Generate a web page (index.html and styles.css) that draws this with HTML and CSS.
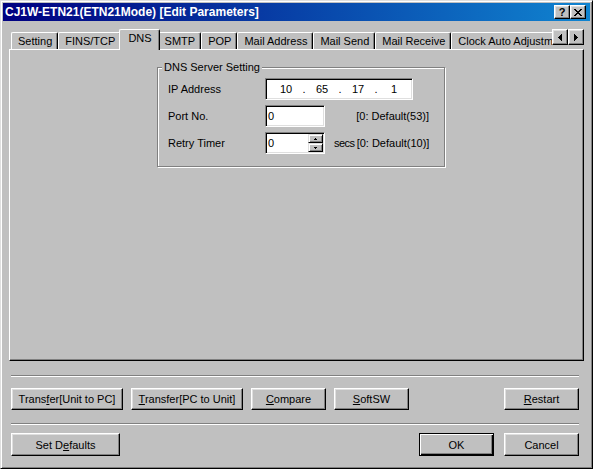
FILE: index.html
```html
<!DOCTYPE html>
<html>
<head>
<meta charset="utf-8">
<title>CJ1W-ETN21(ETN21Mode) [Edit Parameters]</title>
<link rel="stylesheet" href="styles.css">
</head>
<body>
<div class="window">
  <div class="titlebar">
    <span class="title">CJ1W-ETN21(ETN21Mode) [Edit Parameters]</span>
    <div class="caption-buttons">
      <span class="cap-btn help">?</span>
      <span class="cap-btn close">
        <svg width="8" height="7" viewBox="0 0 8 7" shape-rendering="crispEdges"><path d="M0 0h2v1H0zM6 0h2v1H6zM1 1h2v1H1zM5 1h2v1H5zM2 2h4v1H2zM3 3h2v1H3zM2 4h4v1H2zM1 5h2v1H1zM5 5h2v1H5zM0 6h2v1H0zM6 6h2v1H6z" fill="#000"/></svg>
      </span>
    </div>
  </div>

  <div class="tabstrip">
    <div class="tabs">
      <div class="tab">Setting</div>
      <div class="tab">FINS/TCP</div>
      <div class="tab active">DNS</div>
      <div class="tab">SMTP</div>
      <div class="tab">POP</div>
      <div class="tab">Mail Address</div>
      <div class="tab">Mail Send</div>
      <div class="tab">Mail Receive</div>
      <div class="tab">Clock Auto Adjustment</div>
    </div>
    <div class="tab-scroll">
      <span class="scroll-btn">
        <svg width="4" height="7" viewBox="0 0 4 7" shape-rendering="crispEdges"><path d="M0 3h1v1H0zM1 2h1v3H1zM2 1h1v5H2zM3 0h1v7H3z" fill="#000"/></svg>
      </span>
      <span class="scroll-btn">
        <svg width="4" height="7" viewBox="0 0 4 7" shape-rendering="crispEdges"><path d="M0 0h1v7H0zM1 1h1v5H1zM2 2h1v3H2zM3 3h1v1H3z" fill="#000"/></svg>
      </span>
    </div>
  </div>

  <div class="panel">
    <div class="group">
      <span class="legend">DNS Server Setting</span>
      <div class="rows">
        <div class="row">
          <span class="label">IP Address</span>
          <div class="field ip">
            <span class="octet">10</span><span class="dot">.</span>
            <span class="octet">65</span><span class="dot">.</span>
            <span class="octet">17</span><span class="dot">.</span>
            <span class="octet">1</span>
          </div>
        </div>
        <div class="row">
          <span class="label">Port No.</span>
          <div class="field small">
            <span class="field-text">0</span>
          </div>
          <span class="hint">[0: Default(53)]</span>
        </div>
        <div class="row">
          <span class="label">Retry Timer</span>
          <div class="field small">
            <span class="field-text">0</span>
            <div class="spin">
              <span class="spin-btn">
                <svg width="3" height="2" viewBox="0 0 3 2" shape-rendering="crispEdges"><path d="M1 0h1v1H1zM0 1h3v1H0z" fill="#000"/></svg>
              </span>
              <span class="spin-btn">
                <svg width="3" height="2" viewBox="0 0 3 2" shape-rendering="crispEdges"><path d="M0 0h3v1H0zM1 1h1v1H1z" fill="#000"/></svg>
              </span>
            </div>
          </div>
          <span class="unit">secs</span>
          <span class="hint">[0: Default(10)]</span>
        </div>
      </div>
    </div>
  </div>

  <div class="footer">
    <div class="sep first"></div>
    <div class="btn-row top-row">
      <button class="btn wide">Trans<u>f</u>er[Unit to PC]</button>
      <button class="btn wide"><u>T</u>ransfer[PC to Unit]</button>
      <button class="btn"><u>C</u>ompare</button>
      <button class="btn"><u>S</u>oftSW</button>
      <button class="btn push"><u>R</u>estart</button>
    </div>
    <div class="sep second"></div>
    <div class="btn-row bottom-row">
      <button class="btn defaults">Set D<u>e</u>faults</button>
      <button class="btn default push">OK</button>
      <button class="btn">Cancel</button>
    </div>
  </div>
</div>
</body>
</html>
```

FILE: styles.css
```css
* {
  box-sizing: border-box;
}

html, body {
  margin: 0;
  padding: 0;
}

body {
  width: 593px;
  height: 469px;
  overflow: hidden;
  background: #c0c0c0;
  font-family: "Liberation Sans", Arial, sans-serif;
  font-size: 11px;
  color: #000;
}

.window {
  width: 593px;
  height: 469px;
  border: 1px solid;
  border-color: #dfdfdf #000 #000 #dfdfdf;
  box-shadow: inset 1px 1px #fff, inset -1px -1px #808080;
  padding: 2px;
  display: flex;
  flex-direction: column;
}

/* Title bar */
.titlebar {
  height: 18px;
  flex: none;
  display: flex;
  align-items: center;
  padding: 0 4px 0 2px;
  background: linear-gradient(to right, #000080, #1084d0);
  color: #fff;
}

.title {
  font-weight: bold;
  font-size: 12px;
  line-height: 14px;
  white-space: nowrap;
}

.caption-buttons {
  margin-left: auto;
  display: flex;
}

.cap-btn {
  width: 16px;
  height: 14px;
  background: #c0c0c0;
  border: 1px solid;
  border-color: #fff #000 #000 #fff;
  box-shadow: inset -1px -1px #808080, inset 1px 1px #dfdfdf;
  display: flex;
  align-items: center;
  justify-content: center;
  color: #000;
}

.cap-btn.help {
  font-weight: bold;
  font-size: 11px;
  line-height: 11px;
  padding-top: 1px;
}

/* Tabs */
.tabstrip {
  flex: none;
  height: 21px;
  margin: 8px 6px -1px;
  display: flex;
  position: relative;
  z-index: 1;
}

.tabs {
  flex: 1;
  min-width: 0;
  display: flex;
  align-items: flex-end;
  overflow: hidden;
  padding-left: 2px;
}

.tab {
  flex: none;
  height: 17px;
  margin-bottom: 1px;
  padding: 0 5px 0 6px;
  border: 1px solid;
  border-bottom: none;
  border-color: #fff #000 #000 #fff;
  border-radius: 2px 2px 0 0;
  box-shadow: inset -1px 0 #808080;
  background: #c0c0c0;
  display: flex;
  align-items: center;
  white-space: nowrap;
  line-height: 13px;
}

.tab.active {
  height: 21px;
  margin: 0 -2px;
  padding: 0 7px 3px 8px;
  position: relative;
  z-index: 1;
}

.tab-scroll {
  flex: none;
  display: flex;
  align-self: flex-start;
}

.scroll-btn {
  width: 16px;
  height: 16px;
  background: #c0c0c0;
  border: 1px solid;
  border-color: #fff #000 #000 #fff;
  box-shadow: inset -1px -1px #808080, inset 1px 1px #dfdfdf;
  display: flex;
  align-items: center;
  justify-content: center;
}

/* Panel */
.panel {
  flex: none;
  height: 312px;
  margin: 0 6px;
  border: 1px solid;
  border-color: #fff #000 #000 #fff;
  box-shadow: inset -1px -1px #808080;
  padding: 17px 0 0 147px;
}

.group {
  width: 288px;
  border: 1px solid #808080;
  box-shadow: inset 1px 1px #fff, 1px 1px #fff;
  padding: 0 15px 12px 10px;
  display: flex;
  flex-direction: column;
}

.legend {
  align-self: flex-start;
  margin: -7px 0 4px -6px;
  padding: 0 2px;
  background: #c0c0c0;
  line-height: 13px;
  white-space: nowrap;
}

.rows {
  display: flex;
  flex-direction: column;
  gap: 5px;
}

.row {
  height: 22px;
  display: flex;
  align-items: center;
  white-space: nowrap;
}

.label {
  width: 97px;
  flex: none;
}

.field {
  height: 22px;
  flex: none;
  display: flex;
  align-items: stretch;
  background: #fff;
  border: 1px solid;
  border-color: #808080 #fff #fff #808080;
  box-shadow: inset 1px 1px #000, inset -1px -1px #dfdfdf;
  padding: 1px;
}

.field.small {
  width: 60px;
}

.field.ip {
  width: 148px;
  padding-left: 8px;
  align-items: center;
}

.octet {
  width: 24px;
  text-align: center;
}

.dot {
  width: 12px;
  text-align: center;
}

.field-text {
  flex: 1;
  padding-left: 1px;
  line-height: 18px;
}

.spin {
  width: 15px;
  display: flex;
  flex-direction: column;
}

.spin-btn {
  height: 9px;
  background: #c0c0c0;
  border: 1px solid;
  border-color: #dfdfdf #000 #000 #dfdfdf;
  box-shadow: inset 1px 1px #fff, inset -1px -1px #808080;
  display: flex;
  align-items: center;
  justify-content: center;
}

.unit {
  margin-left: 9px;
  margin-right: 2px;
  letter-spacing: -0.5px;
}

.hint {
  margin-left: auto;
}

/* Footer */
.footer {
  flex: none;
  padding: 0 11px 0 8px;
  display: flex;
  flex-direction: column;
}

.sep {
  height: 2px;
  border-top: 1px solid #808080;
  border-bottom: 1px solid #fff;
}

.sep.first {
  margin-top: 14px;
}

.sep.second {
  margin-top: 13px;
}

.btn-row {
  display: flex;
  gap: 8px;
}

.top-row {
  margin-top: 11px;
}

.bottom-row {
  margin-top: 8px;
  gap: 10px;
}

.btn {
  width: 75px;
  height: 22px;
  padding: 0;
  margin: 0;
  font: inherit;
  color: #000;
  background: #c0c0c0;
  border: 1px solid;
  border-color: #fff #000 #000 #fff;
  box-shadow: inset -1px -1px #808080, inset 1px 1px #dfdfdf;
  white-space: nowrap;
  text-align: center;
}

.bottom-row .btn {
  height: 23px;
}

.btn.wide {
  width: 112px;
}

.btn.defaults {
  width: 109px;
}

.btn.default {
  border-color: #000;
  box-shadow: inset 1px 1px #fff, inset -1px -1px #000, inset -2px -2px #808080;
}

.btn.push {
  margin-left: auto;
}
```
